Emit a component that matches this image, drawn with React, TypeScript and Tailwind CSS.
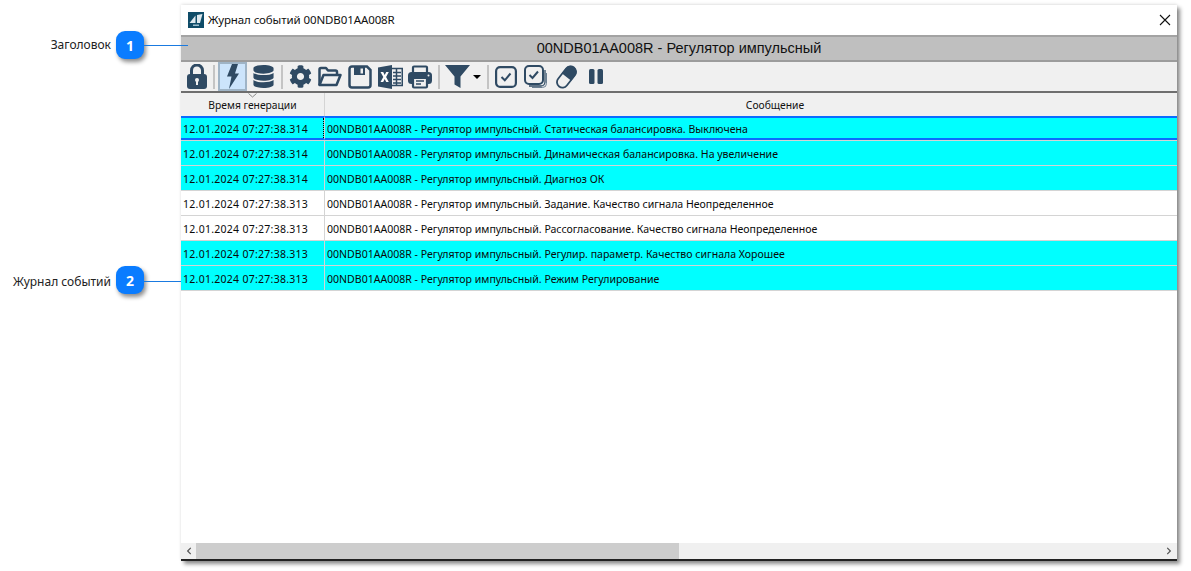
import { FaDatabase, FaCog, FaChevronLeft, FaChevronRight } from 'react-icons/fa';

const rows = [
  { time: '12.01.2024 07:27:38.314', text: '00NDB01AA008R - Регулятор импульсный. Статическая балансировка. Выключена', cyan: true, selected: true },
  { time: '12.01.2024 07:27:38.314', text: '00NDB01AA008R - Регулятор импульсный. Динамическая балансировка. На увеличение', cyan: true },
  { time: '12.01.2024 07:27:38.314', text: '00NDB01AA008R - Регулятор импульсный. Диагноз ОК', cyan: true },
  { time: '12.01.2024 07:27:38.313', text: '00NDB01AA008R - Регулятор импульсный. Задание. Качество сигнала Неопределенное', cyan: false },
  { time: '12.01.2024 07:27:38.313', text: '00NDB01AA008R - Регулятор импульсный. Рассогласование. Качество сигнала Неопределенное', cyan: false },
  { time: '12.01.2024 07:27:38.313', text: '00NDB01AA008R - Регулятор импульсный. Регулир. параметр. Качество сигнала Хорошее', cyan: true },
  { time: '12.01.2024 07:27:38.313', text: '00NDB01AA008R - Регулятор импульсный. Режим Регулирование', cyan: true },
];

const ink = '#2f4a63';

function Callout({ label, num, line, labelClass }: { label: string; num: number; line: string; labelClass: string }) {
  return (
    <div className="relative flex items-center justify-end h-[28px] pr-[70px] text-[12px] text-[#222]">
      <span className={labelClass}>{label}</span>
      <div className="absolute left-[116px] top-0 w-[28px] h-[28px] rounded-[9px] bg-[#0a7cff] text-white font-bold text-[14px] flex items-center justify-center shadow-[2px_3px_4px_rgba(0,0,0,0.45)]">
        {num}
      </div>
      <div className={line} />
    </div>
  );
}

function Sep({ className }: { className: string }) {
  return <div className={`w-[2px] h-[24px] bg-[#c4c4c4] ${className}`} />;
}

function Lock() {
  return (
    <svg width="20" height="25" viewBox="0 0 20 25" className="ml-[6px]">
      <path d="M4.500 11V6.500a5.500 5.500 0 0 1 11 0V11" fill="none" stroke={ink} strokeWidth="3" />
      <rect x="0" y="10" width="20" height="15" rx="3" fill={ink} />
      <circle cx="10" cy="16" r="2" fill="#f0f0f0" />
      <rect x="9" y="16" width="2" height="5" fill="#f0f0f0" />
    </svg>
  );
}

function Bolt() {
  return (
    <svg width="12" height="25" viewBox="0 0 12 25">
      <path d="M5 0h6L8 9.500h4L2 25l2.500-12.500H0z" fill={ink} />
    </svg>
  );
}

function Folder() {
  return (
    <svg width="24" height="21" viewBox="0 0 24 21" className="ml-[6px]">
      <path d="M1.500 19V3.500A1.500 1.500 0 0 1 3 2h5l2 2.500h7.500A1.500 1.500 0 0 1 19 6v2.500" fill="none" stroke={ink} strokeWidth="2.500" strokeLinejoin="round" />
      <path d="M1.500 19l4-10h17l-4 10z" fill="none" stroke={ink} strokeWidth="2.500" strokeLinejoin="round" />
    </svg>
  );
}

function Save() {
  return (
    <svg width="24" height="24" viewBox="0 0 24 24" className="ml-[6px]">
      <path d="M1.500 4A2.500 2.500 0 0 1 4 1.500h15L22.500 5v15a2.500 2.500 0 0 1-2.500 2.500H4A2.500 2.500 0 0 1 1.500 20z" fill="none" stroke={ink} strokeWidth="2.500" />
      <path d="M6 2h11v8H6z" fill={ink} />
      <path d="M12.500 3.500h2.500v5h-2.500z" fill="#f0f0f0" />
    </svg>
  );
}

function Excel() {
  return (
    <svg width="25" height="24" viewBox="0 0 25 24" className="ml-[6px]">
      <path d="M13 3.500h11.250v17H13z" fill="none" stroke={ink} strokeWidth="1.500" />
      <path d="M15 7.500h8M15 11h8M15 14.500h8M15 18h8M18.500 4v16" stroke={ink} strokeWidth="1.500" />
      <path d="M0 2.500 14 0v24L0 21.500z" fill={ink} />
      <path d="M2.500 7h2.700l1.500 3 1.500-3h2.600l-2.700 5 2.700 5H8.200l-1.500-3-1.500 3H2.500l2.800-5z" fill="#fff" />
    </svg>
  );
}

function Printer() {
  return (
    <svg width="24" height="24" viewBox="0 0 24 24" className="ml-[5px]">
      <path d="M5 8V2.500a1 1 0 0 1 1-1h12a1 1 0 0 1 1 1V8" fill="none" stroke={ink} strokeWidth="2.200" />
      <rect x="0" y="7" width="24" height="12" rx="3.500" fill={ink} />
      <rect x="5" y="13" width="14" height="9.500" rx="1" fill="#f0f0f0" stroke={ink} strokeWidth="2.200" />
      <path d="M8 16h8M8 19h5" stroke={ink} strokeWidth="1.400" />
      <circle cx="20.500" cy="10.500" r="1" fill="#f0f0f0" />
    </svg>
  );
}

function Funnel() {
  return (
    <svg width="25" height="25" viewBox="0 0 25 25" className="ml-[5px]">
      <path d="M0 1h25L15.500 12.500V24l-6-3.500v-8z" fill={ink} />
    </svg>
  );
}

function CheckBox() {
  return (
    <svg width="22" height="24" viewBox="0 0 22 24" className="ml-[6px]">
      <rect x="1.100" y="2.100" width="19.800" height="19.800" rx="4" fill="none" stroke={ink} strokeWidth="2.200" />
      <path d="M6.500 12l3.300 3.300 5.700-6.800" fill="none" stroke={ink} strokeWidth="2" />
    </svg>
  );
}

function CheckStack() {
  return (
    <svg width="23" height="24" viewBox="0 0 23 24" className="ml-[7px]">
      <rect x="1" y="1" width="18" height="18" rx="4" fill="none" stroke={ink} strokeWidth="2" />
      <path d="M5.500 10l3 3 5.500-6.500" fill="none" stroke={ink} strokeWidth="2" />
      <path d="M21 5v12a4 4 0 0 1-4 4H5" fill="none" stroke={ink} strokeWidth="1.300" />
      <path d="M22.500 8v10.500a4 4 0 0 1-4 4H8" fill="none" stroke="#6b7f92" strokeWidth="1" />
    </svg>
  );
}

function Eraser() {
  return (
    <svg width="21" height="24" viewBox="0 0 21 24" className="ml-[9px]">
      <g transform="rotate(38 10.500 12)">
        <rect x="5" y="0" width="11" height="24" rx="5.500" fill="none" stroke={ink} strokeWidth="1.800" />
        <path d="M4.500 12V5.500a6 6 0 0 1 12 0V12z" fill={ink} />
      </g>
    </svg>
  );
}

function Pause() {
  return (
    <svg width="14" height="15" viewBox="0 0 14 15" className="ml-[12px]">
      <rect x="0" y="0" width="5.500" height="15" rx="1.500" fill={ink} />
      <rect x="8.500" y="0" width="5.500" height="15" rx="1.500" fill={ink} />
    </svg>
  );
}

export default function App() {
  return (
    <div className="flex h-[571px] w-[1191px] bg-white overflow-hidden font-['Noto_Sans',sans-serif]">
      <div className="w-[181px] shrink-0 pt-[31px]">
        <Callout label="Заголовок" num={1} labelClass="" line="absolute left-[144px] top-[14px] w-[44px] h-px bg-[#1a7ae0]" />
        <div className="h-[207px]" />
        <Callout label="Журнал событий" num={2} labelClass="pt-[3px]" line="absolute left-[144px] top-[15px] w-[37px] h-px bg-[#1a7ae0]" />
      </div>

      <div className="w-[996px] h-[556px] mt-[5px] flex flex-col bg-white border-b-2 border-[#222] shadow-[3px_3px_4px_rgba(0,0,0,0.45),0_-1px_3px_rgba(0,0,0,0.1)]">
        <div className="h-[30px] shrink-0 flex items-center pl-[7px] pr-[6px] pb-[1px] text-[11.5px] tracking-[-0.1px] text-[#111]">
          <svg width="16" height="16" viewBox="0 0 16 16" className="mr-[4px]">
            <rect width="16" height="16" fill="#0f4c68" />
            <path d="M1.500 11 7.500 3.500V11zM9 11V3l5.500-1-2.500 9z" fill="#dfe9ee" />
            <rect x="5" y="12.500" width="6" height="1.500" fill="#9fc0cf" />
          </svg>
          <span className="flex-1">Журнал событий 00NDB01AA008R</span>
          <svg width="12" height="12" viewBox="0 0 12 12">
            <path d="M1 1l10 10M11 1 1 11" stroke="#111" strokeWidth="1.100" />
          </svg>
        </div>

        <div className="h-[25px] shrink-0 bg-[#bfbfbf] border-t-2 border-[#a3a3a3] flex items-center justify-center font-['Liberation_Sans',sans-serif] text-[14.5px] text-[#111]">
          00NDB01AA008R - Регулятор импульсный
        </div>

        <div className="h-[33px] shrink-0 bg-[#f0f0f0] border-t-2 border-[#9c9c9c] border-b-2 border-b-[#6e6e6e] flex items-center text-[#2f4a63]">
          <Lock />
          <Sep className="ml-[6px]" />
          <div className="w-[29px] h-[29px] ml-[3px] bg-[#cce4fb] border-2 border-[#9fb4c6] flex items-center justify-center">
            <Bolt />
          </div>
          <FaDatabase size={23} className="ml-[5px]" />
          <Sep className="ml-[6px]" />
          <FaCog size={23} className="ml-[6px]" />
          <Folder />
          <Save />
          <Excel />
          <Printer />
          <Sep className="ml-[6px]" />
          <Funnel />
          <div className="w-0 h-0 ml-[3px] border-x-[4px] border-x-transparent border-t-[4px] border-t-black" />
          <Sep className="ml-[6px]" />
          <CheckBox />
          <CheckStack />
          <Eraser />
          <Pause />
        </div>

        <div className="h-[23px] shrink-0 bg-[#f0f0f0] flex text-[10.3px] text-[#111] overflow-hidden">
          <div className="relative w-[144px] shrink-0 border-r border-[#d4d4d4] flex items-center justify-center pt-[2px]">
            <svg width="9" height="5" viewBox="0 0 9 5" className="absolute top-0 left-[67px]">
              <path d="M.5.5l4 3.500 4-3.500" fill="none" stroke="#888" />
            </svg>
            Время генерации
          </div>
          <div className="w-[900px] shrink-0 flex items-center justify-center pt-[2px]">Сообщение</div>
        </div>

        <div className="flex-1 min-h-0 text-[10.55px] text-[#0a0a0a]">
          {rows.map((r) => (
            <div key={r.text} className={`h-[25px] flex border-b border-[#d4d4d4] ${r.cyan ? 'bg-[#00ffff]' : 'bg-white'}`}>
              <div className={`relative w-[144px] shrink-0 flex items-center pl-[2px] pt-[3px] text-[10.5px] tracking-[0.27px] border-r border-[#d4d4d4] ${r.selected ? 'border-y-2 border-y-[#0a6cff]' : ''}`}>
                {r.time}
                {r.selected && <div className="absolute right-0 top-0 bottom-0 border-r border-dotted border-black" />}
              </div>
              <div className={`flex-1 flex items-center pl-[2px] pt-[3px] ${r.selected ? 'border-y-2 border-y-[#0a6cff]' : ''}`}>{r.text}</div>
            </div>
          ))}
        </div>

        <div className="h-[16px] shrink-0 bg-[#f0f0f0] flex items-center text-[#555]">
          <div className="w-[15px] flex justify-center"><FaChevronLeft size={8} /></div>
          <div className="w-[483px] h-full bg-[#cdcdcd]" />
          <div className="flex-1" />
          <div className="w-[17px] flex justify-center"><FaChevronRight size={8} /></div>
        </div>
      </div>
    </div>
  );
}
